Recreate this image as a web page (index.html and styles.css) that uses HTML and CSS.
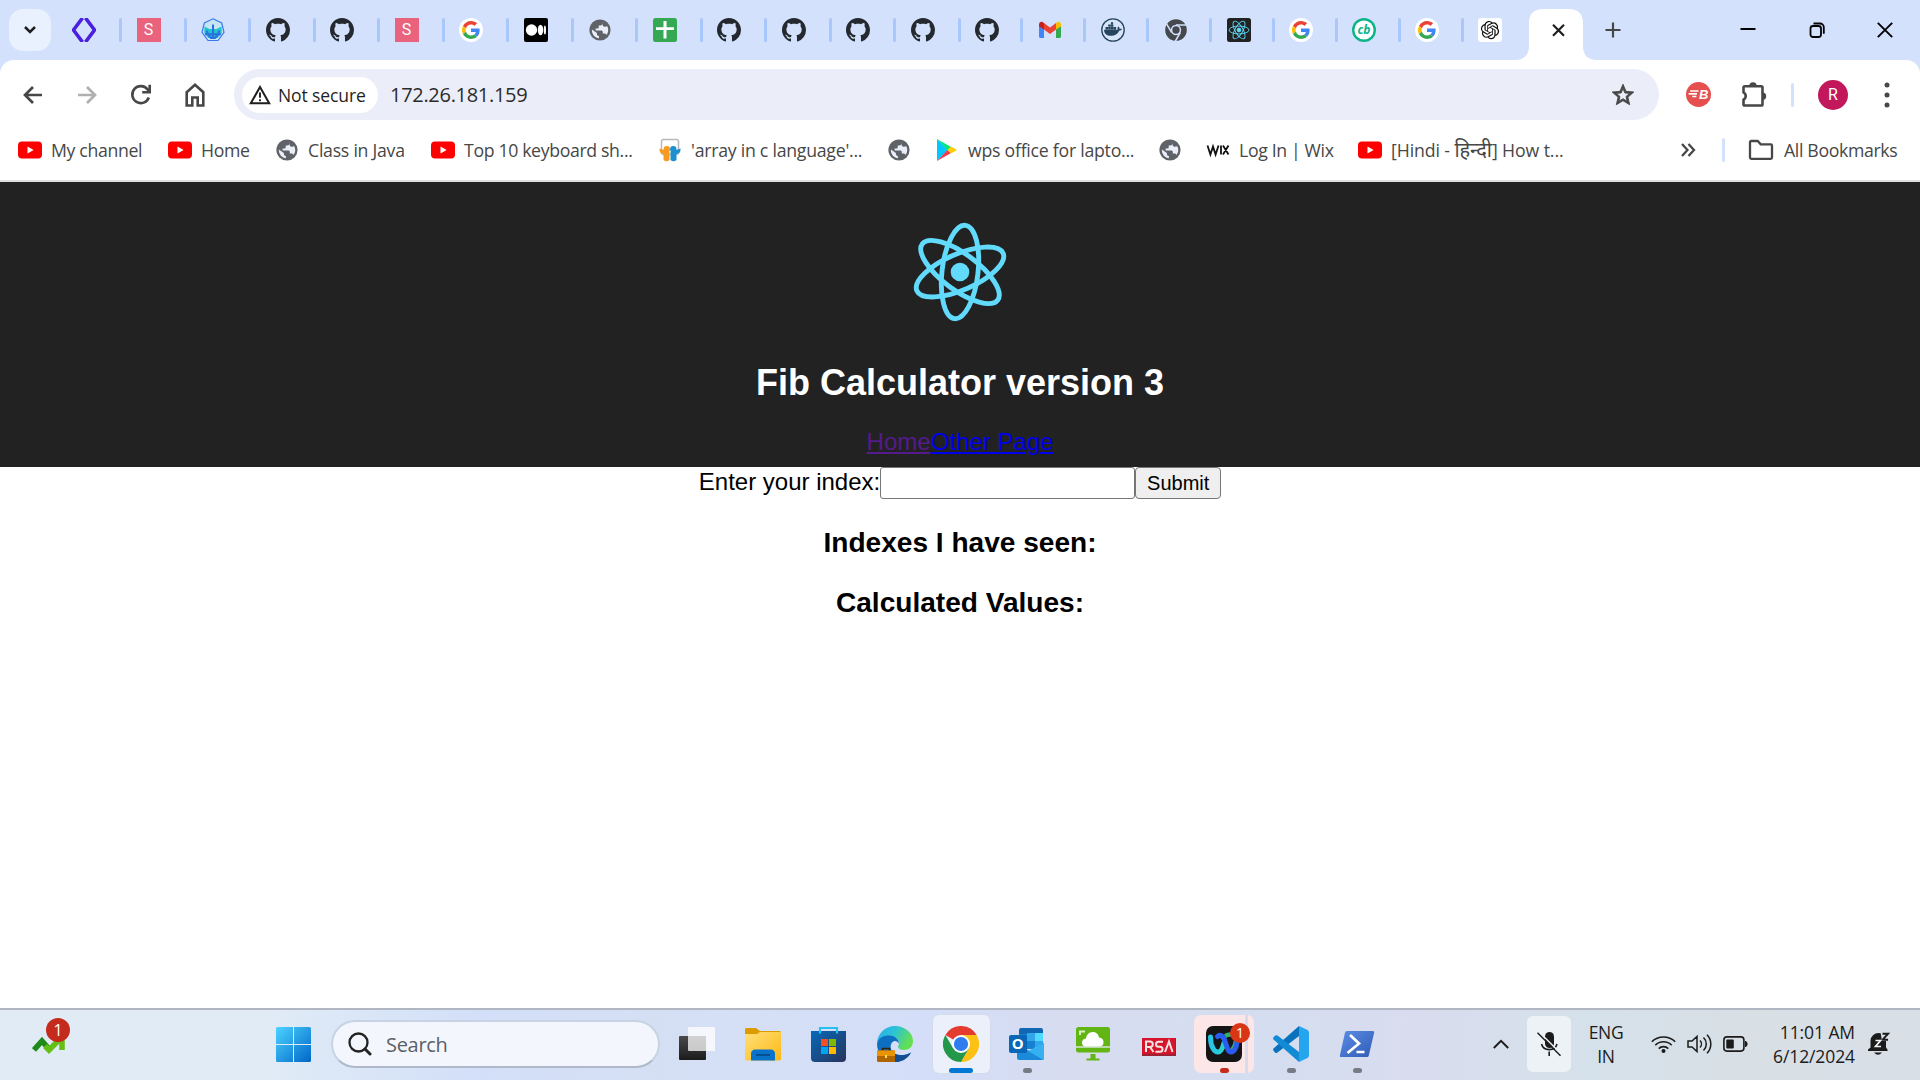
FILE: index.html
```html
<!DOCTYPE html>
<html lang="en">
<head>
<meta charset="utf-8">
<title>Fib Calculator</title>
<link rel="stylesheet" href="styles.css">
</head>
<body>
<svg class="defs" aria-hidden="true">
  <defs>
    <linearGradient id="win" x1="0" y1="0" x2="1" y2="1"><stop offset="0" stop-color="#4cd3ff"/><stop offset="1" stop-color="#0067c8"/></linearGradient>
    <linearGradient id="dark" x1="0" y1="0" x2="0" y2="1"><stop offset="0" stop-color="#4a4a4a"/><stop offset="1" stop-color="#1b1b1b"/></linearGradient>
    <linearGradient id="fold" x1="0" y1="0" x2="1" y2="1"><stop offset="0" stop-color="#ffe07a"/><stop offset="1" stop-color="#fdb813"/></linearGradient>
    <linearGradient id="store" x1="0" y1="0" x2="1" y2="1"><stop offset="0" stop-color="#0669ba"/><stop offset="1" stop-color="#29335a"/></linearGradient>
    <linearGradient id="edgeTop" x1="0" y1="0" x2="1" y2=".4"><stop offset="0" stop-color="#2aa9ee"/><stop offset=".5" stop-color="#2cc3d5"/><stop offset="1" stop-color="#63e052"/></linearGradient>
    <linearGradient id="ps" x1="0" y1="0" x2="1" y2="1"><stop offset="0" stop-color="#5c8ee6"/><stop offset="1" stop-color="#2f5bb5"/></linearGradient>
    <linearGradient id="wxa" x1="0" y1="0" x2="1" y2="0"><stop offset="0" stop-color="#27c4ea"/><stop offset="1" stop-color="#2ad0c8"/></linearGradient>
  </defs>
  <symbol id="github" viewBox="0 0 16 16"><path fill="#24292f" d="M8 0C3.58 0 0 3.58 0 8c0 3.54 2.29 6.53 5.47 7.59.4.07.55-.17.55-.38 0-.19-.01-.82-.01-1.49-2.01.37-2.53-.49-2.69-.94-.09-.23-.48-.94-.82-1.13-.28-.15-.68-.52-.01-.53.63-.01 1.08.58 1.23.82.72 1.21 1.87.87 2.33.66.07-.52.28-.87.51-1.07-1.78-.2-3.64-.89-3.64-3.95 0-.87.31-1.59.82-2.15-.08-.2-.36-1.02.08-2.12 0 0 .67-.21 2.2.82.64-.18 1.32-.27 2-.27s1.36.09 2 .27c1.53-1.04 2.2-.82 2.2-.82.44 1.1.16 1.92.08 2.12.51.56.82 1.27.82 2.15 0 3.07-1.87 3.75-3.65 3.95.29.25.54.73.54 1.48 0 1.07-.01 1.93-.01 2.2 0 .21.15.46.55.38A8.01 8.01 0 0016 8c0-4.42-3.58-8-8-8z"/></symbol>
  <symbol id="google" viewBox="0 0 24 24"><circle cx="12" cy="12" r="12" fill="#fff"/><g transform="translate(3 3) scale(.375)"><path fill="#EA4335" d="M24 9.5c3.54 0 6.71 1.22 9.21 3.6l6.85-6.85C35.9 2.38 30.47 0 24 0 14.62 0 6.51 5.38 2.56 13.22l7.98 6.19C12.43 13.72 17.74 9.5 24 9.5z"/><path fill="#4285F4" d="M46.98 24.55c0-1.57-.15-3.09-.38-4.55H24v9.02h12.94c-.58 2.96-2.26 5.48-4.78 7.18l7.73 6c4.51-4.18 7.09-10.36 7.09-17.65z"/><path fill="#FBBC05" d="M10.53 28.59c-.48-1.45-.76-2.99-.76-4.59s.27-3.14.76-4.59l-7.98-6.19C.92 16.46 0 20.12 0 24c0 3.88.92 7.54 2.56 10.78l7.97-6.19z"/><path fill="#34A853" d="M24 48c6.48 0 11.93-2.13 15.89-5.81l-7.73-6c-2.15 1.45-4.92 2.3-8.16 2.3-6.26 0-11.57-4.22-13.47-9.91l-7.98 6.19C6.51 42.62 14.62 48 24 48z"/></g></symbol>
  <symbol id="globe" viewBox="1 1 22 22"><circle cx="12" cy="12" r="10.6" fill="#5f6368"/><path fill="#e9eef8" d="M14.5 3.8c.8 1.7-.2 3.5-2 3.6h-1.8v1.8c0 .8-.5 1.2-1.3 1.2H7.6v2h5.600c1 0 1.600.7 1.600 1.600v1.600h1.800c.9 0 1.500.6 1.700 1.500 1.200-1.400 1.900-3.100 1.900-5.100 0-1.500-.4-2.600-1-3.700l-2.300.4c-1.500.1-2.500-1-2.200-2.300zM3.900 11.500c-.3 4.500 2.800 8.300 7 8.700v-2.300c-1.200 0-2-.9-2-2v-1z"/></symbol>
  <symbol id="youtube" viewBox="0 0 24 24"><rect y="3.500" width="24" height="17" rx="4" fill="#f00"/><path fill="#fff" d="M9.500 8.600v6.800L15.600 12z"/></symbol>
  <symbol id="atom" viewBox="-50 -50 100 100"><g fill="none" stroke="#61dafb" stroke-width="4.900"><ellipse rx="47" ry="18" transform="rotate(-83.400)"/><ellipse rx="47" ry="18" transform="rotate(-23.400)"/><ellipse rx="47" ry="18" transform="rotate(36.600)"/></g><circle r="9.300" fill="#61dafb"/></symbol>
</svg>

<header class="browser">
  <div class="tabstrip">
    <div class="tab-search"><svg width="14" height="10" viewBox="0 0 14 10"><path d="M2 2l5 5 5-5" fill="none" stroke="#1f1f1f" stroke-width="2.500"/></svg></div>
    <div class="tab"><svg viewBox="0 0 24 24"><path d="M10.500 0L1.500 12l9 12M13.500 0l9 12-9 12" fill="none" stroke="#4a1fe0" stroke-width="3.600"/></svg></div>
    <div class="tab"><span class="letter">S</span></div>
    <div class="tab"><svg viewBox="0 0 24 24"><path d="M12 .8l8.700 4.200 2.300 9.300-6 8.200H7l-6-8.200L3.300 5z" fill="#c4e6f2" stroke="#3e78ee" stroke-width="1.200"/><path d="M3.500 8.500l5 2.500h7l5-2.500.3 6.500-4.300 5h-9l-4.300-5z" fill="#22c4ce"/><path d="M12 6.500v14.500M6 12.500c0 3 1.500 5 4 7.500h4c2.500-2.500 4-4.500 4-7.500M4 16.200h16" fill="none" stroke="#2b6fe0" stroke-width="2"/></svg></div>
    <div class="tab"><svg><use href="#github"/></svg></div>
    <div class="tab"><svg><use href="#github"/></svg></div>
    <div class="tab"><span class="letter">S</span></div>
    <div class="tab"><svg><use href="#google"/></svg></div>
    <div class="tab"><svg viewBox="0 0 24 24"><rect width="24" height="24" rx="2"/><g fill="#fff"><circle cx="7.500" cy="12" r="5.700"/><ellipse cx="16.500" cy="12" rx="2.700" ry="5.200"/><ellipse cx="20.900" cy="12" rx="1.100" ry="4.600"/></g></svg></div>
    <div class="tab"><svg class="inset"><use href="#globe"/></svg></div>
    <div class="tab"><svg viewBox="0 0 24 24"><rect width="24" height="24" rx="2.500" fill="#34a853"/><path d="M10.500 3h3v6.200H21v2.800h-7.500v8.500h-3V12H3V9.200h7.500z" fill="#fff"/></svg></div>
    <div class="tab"><svg><use href="#github"/></svg></div>
    <div class="tab"><svg><use href="#github"/></svg></div>
    <div class="tab"><svg><use href="#github"/></svg></div>
    <div class="tab"><svg><use href="#github"/></svg></div>
    <div class="tab narrow"><svg><use href="#github"/></svg></div>
    <div class="tab narrow"><svg viewBox="0 0 24 24"><path fill="#4285f4" d="M1 7v11.500C1 19.300 1.700 20 2.500 20H6V10z"/><path fill="#34a853" d="M18 20h3.500c.8 0 1.500-.7 1.500-1.500V7l-5 3z"/><path fill="#ea4335" d="M6 11.500V5l6 4.600L18 5v6.500L12 16z"/><path fill="#c5221f" d="M1 6.500v2l5 3V5L4.500 4C2.900 2.900 1 4.500 1 6.500z"/><path fill="#fbbc04" d="M18 5v6.500l5-3v-2c0-2-1.900-3.600-3.500-2.500z"/></svg></div>
    <div class="tab narrow"><svg viewBox="0 0 24 24"><circle cx="12" cy="12" r="11.200" fill="#d7e5fa" stroke="#25455c" stroke-width="1.300"/><path fill="#25455c" d="M3 11.700h13.800c-.6-1.300-.3-2.300.5-3.200 1.100.6 1.300 1.500 1.200 2.300 1-.3 1.800-.1 2.500.3-.5 1.200-1.500 1.600-2.800 1.600-1.500 3.600-4.300 5-8 5-4.500 0-7-2-7.200-6zM4.500 9h2.500v2.500H4.500zM7.200 9h2.500v2.500H7.200zM9.900 9h2.500v2.500H9.900zM12.600 9h2.500v2.500h-2.500zM7.200 6.600h2.500v2.200H7.200zM9.900 6.600h2.500v2.200H9.900zM9.900 4.300h2.200v2H9.900z"/></svg></div>
    <div class="tab narrow"><svg viewBox="0 0 24 24"><circle cx="12" cy="12" r="8" fill="none" stroke="#45494d" stroke-width="5.600"/><circle cx="12" cy="12" r="3.700" fill="#45494d"/><path d="M12 7h10.500M7.700 14.500L2.400 5.600M16.300 14.500l-5.200 9" stroke="#d3e1fc" stroke-width="1.500"/></svg></div>
    <div class="tab narrow"><svg viewBox="0 0 24 24"><rect width="24" height="24" rx="2.500" fill="#222"/><g fill="none" stroke="#61dafb" stroke-width=".9" transform="translate(12 12)"><ellipse rx="10" ry="3.900"/><ellipse rx="10" ry="3.900" transform="rotate(60)"/><ellipse rx="10" ry="3.900" transform="rotate(120)"/><circle r="1.900" fill="#61dafb"/></g></svg></div>
    <div class="tab narrow"><svg><use href="#google"/></svg></div>
    <div class="tab narrow"><svg viewBox="0 0 24 24"><circle cx="12" cy="12" r="12" fill="#0eb489"/><circle cx="12" cy="12" r="9.600" fill="#fff"/><text x="12" y="16" font-size="12" font-weight="700" font-style="italic" text-anchor="middle" fill="#0eb489" font-family="Open Sans, sans-serif">cb</text></svg></div>
    <div class="tab narrow"><svg><use href="#google"/></svg></div>
    <div class="tab narrow last"><svg viewBox="0 0 24 24"><rect width="24" height="24" rx="3" fill="#fff"/><path transform="translate(2.900 2.900) scale(.76)" fill="#111" d="M22.282 9.821a5.985 5.985 0 0 0-.516-4.910 6.046 6.046 0 0 0-6.510-2.900A6.065 6.065 0 0 0 4.981 4.182a5.985 5.985 0 0 0-3.998 2.900 6.046 6.046 0 0 0 .743 7.097 5.980 5.980 0 0 0 .511 4.911 6.051 6.051 0 0 0 6.515 2.900A5.985 5.985 0 0 0 13.260 24a6.056 6.056 0 0 0 5.772-4.206 5.989 5.989 0 0 0 3.998-2.900 6.056 6.056 0 0 0-.748-7.073zm-9.022 12.608a4.476 4.476 0 0 1-2.876-1.041l.142-.080 4.778-2.758a.795.795 0 0 0 .393-.681v-6.737l2.020 1.169a.071.071 0 0 1 .038.052v5.583a4.504 4.504 0 0 1-4.495 4.494zm-9.661-4.125a4.471 4.471 0 0 1-.535-3.014l.142.085 4.783 2.758a.771.771 0 0 0 .781 0l5.843-3.369v2.332a.080.080 0 0 1-.033.062L9.740 19.950a4.499 4.499 0 0 1-6.141-1.646zM2.341 7.896a4.485 4.485 0 0 1 2.366-1.973V11.600a.766.766 0 0 0 .388.677l5.814 3.354-2.020 1.169a.076.076 0 0 1-.071 0l-4.830-2.787A4.504 4.504 0 0 1 2.341 7.872zm16.596 3.856L13.104 8.364 15.119 7.200a.076.076 0 0 1 .071 0l4.830 2.791a4.494 4.494 0 0 1-.677 8.104v-5.677a.790.790 0 0 0-.407-.667zm2.011-3.023l-.142-.085-4.774-2.782a.776.776 0 0 0-.785 0L9.409 9.230V6.897a.066.066 0 0 1 .028-.062l4.830-2.787a4.499 4.499 0 0 1 6.680 4.660zM8.307 12.863l-2.020-1.164a.080.080 0 0 1-.038-.057V6.074a4.499 4.499 0 0 1 7.376-3.454l-.142.081L8.704 5.459a.795.795 0 0 0-.393.681zm1.098-2.365l2.602-1.500 2.607 1.500v2.999l-2.597 1.500-2.607-1.500Z"/></svg></div>
    <div class="tab-active">
      <svg width="82" height="51" viewBox="0 0 82 51"><path d="M0 51c9 0 14-5 14-14V14C14 5 19 0 28 0h26c9 0 14 5 14 14v23c0 9 5 14 14 14z" fill="#fff"/><path d="M38 15.800l11 11M49 15.800l-11 11" stroke="#1f1f1f" stroke-width="2.200"/></svg>
    </div>
    <svg class="new-tab" width="16" height="16" viewBox="0 0 16 16"><path d="M8 .5v15M.5 8h15" stroke="#444746" stroke-width="2.200"/></svg>
    <div class="window-buttons">
      <svg viewBox="0 0 16 16"><path d="M.5 7h15" stroke="#000" stroke-width="2"/></svg>
      <svg viewBox="0 0 16 16"><rect x="1.500" y="4" width="10.500" height="11" rx="2.500" fill="none" stroke="#000" stroke-width="1.800"/><path d="M4.500 1.500h6.500a3.800 3.800 0 0 1 3.800 3.800v6.500" fill="none" stroke="#000" stroke-width="1.800"/></svg>
      <svg viewBox="0 0 16 16"><path d="M.8.8l14.400 14.400M15.200.8L.8 15.200" stroke="#000" stroke-width="1.900"/></svg>
    </div>
  </div>

  <div class="chrome-panel">
    <div class="toolbar">
      <svg class="nav-icon" viewBox="0 0 24 24"><path d="M21 12H4.500M12 4l-8 8 8 8" fill="none" stroke="#474747" stroke-width="2.700"/></svg>
      <svg class="nav-icon" viewBox="0 0 24 24"><path d="M3 12h16.500M12 4l8 8-8 8" fill="none" stroke="#b0b0b0" stroke-width="2.700"/></svg>
      <svg class="nav-icon" viewBox="0 0 24 24"><path d="M19.800 14.500A8.500 8.500 0 1 1 18.600 6.500L20.500 9M20.700 1.800v7.500h-7.500" fill="none" stroke="#474747" stroke-width="2.600"/></svg>
      <svg class="nav-icon" viewBox="0 0 24 24"><path d="M3.700 9.200L12 1.800l8.300 7.400v13.300h-5.600v-8H9.300v8H3.700z" fill="none" stroke="#474747" stroke-width="2.600"/></svg>
      <div class="omnibox">
        <div class="chip"><svg width="22" height="20" viewBox="0 0 22 20"><path d="M11 2L1.800 18.300h18.400z" fill="none" stroke="#1f1f1f" stroke-width="2"/><path d="M11 7.500v5.300M11 14.200v2" stroke="#1f1f1f" stroke-width="1.900"/></svg><span>Not secure</span></div>
        <span class="url">172.26.181.159</span>
        <svg class="star" width="26" height="26" viewBox="0 0 24 24"><path fill="#474747" d="M22 9.240l-7.190-.62L12 2 9.190 8.630 2 9.240l5.460 4.730L5.820 21 12 17.270 18.180 21l-1.630-7.030L22 9.240zM12 15.400l-3.760 2.270 1-4.280-3.320-2.880 4.380-.38L12 6.100l1.710 4.040 4.380.38-3.320 2.880 1 4.280L12 15.400z" stroke="#474747" stroke-width=".8"/></svg>
      </div>
      <svg class="ext" width="25" height="25" viewBox="0 0 24 24"><circle cx="12" cy="12" r="12" fill="#e5504f"/><path d="M4 8.700h8M2.500 11.400h8M6 14h4" stroke="#fff" stroke-width="1.500"/><text x="17" y="16.300" font-size="12.500" font-weight="700" font-style="italic" text-anchor="middle" fill="#fff" font-family="Liberation Sans, sans-serif">B</text></svg>
      <svg class="puzzle" width="28" height="28" viewBox="0 0 28 28"><path d="M3.500 6.500c0-.8.500-1.300 1.300-1.300h16.400c.8 0 1.300.5 1.300 1.300v16.700c0 .8-.5 1.300-1.300 1.300H4.800c-.8 0-1.300-.5-1.300-1.300v-4.500a4.200 4.200 0 0 0 0-7.400z" fill="none" stroke="#474747" stroke-width="2.600"/><path d="M9.300 5a3.700 3.700 0 0 1 7.400 0zM22.500 11.500a3.700 3.700 0 0 1 0 7.400z" fill="#474747"/></svg>
      <span class="divider"></span>
      <span class="avatar">R</span>
      <svg class="dots" width="6" height="26" viewBox="0 0 6 26"><g fill="#474747"><circle cx="3" cy="3" r="2.500"/><circle cx="3" cy="13" r="2.500"/><circle cx="3" cy="23" r="2.500"/></g></svg>
    </div>
    <nav class="bookmarks">
      <a class="bm w150"><svg><use href="#youtube"/></svg><span>My channel</span></a>
      <a class="bm w108"><svg><use href="#youtube"/></svg><span>Home</span></a>
      <a class="bm w155"><svg class="sm"><use href="#globe"/></svg><span class="loose">Class in Java</span></a>
      <a class="bm w227"><svg><use href="#youtube"/></svg><span>Top 10 keyboard sh...</span></a>
      <a class="bm w230"><svg viewBox="0 0 24 24"><rect x="3.500" y="1.500" width="17" height="15" rx="2" fill="#fff" stroke="#b9b9b9" stroke-width="1.500"/><path d="M1.500 10.500q-.5 5 4 5.500v6q3 2.500 6 0V14z" fill="#f69a20"/><path d="M22.500 10.500q.5 5-4 5.500v6q-3 2.500-6 0V14z" fill="#1f8fd0"/><circle cx="8.800" cy="11.300" r="3.200" fill="#f69a20"/><circle cx="15.300" cy="11.300" r="3.200" fill="#1f8fd0"/></svg><span class="loose">'array in c language'...</span></a>
      <a class="bm w49"><svg class="sm"><use href="#globe"/></svg></a>
      <a class="bm w222"><svg viewBox="0 0 24 24"><path d="M2 1l11 11L2 23z" fill="#00c8ff"/><path d="M2 1l14 8-3.500 3z" fill="#00e676"/><path d="M2 23l14-8-3.500-3z" fill="#f4384a"/><path d="M16 8.500l6 3.500-6 3.500-3.500-3.500z" fill="#ffcd00"/></svg><span class="loose">wps office for lapto...</span></a>
      <a class="bm w49"><svg class="sm"><use href="#globe"/></svg></a>
      <a class="bm w150 wix"><svg viewBox="0 0 24 24"><path d="M1.500 7.500L4.400 16.500 7 8.500 9.600 16.500l2.900-9M15 7.500v9M17 7.500l5.500 9M22.500 7.500l-5.500 9" fill="none" stroke="#111" stroke-width="1.800"/></svg><span>Log In | Wix</span></a>
      <a class="bm"><svg><use href="#youtube"/></svg><span class="hindi">[Hindi - <b>हिन्दी</b>] How t...</span></a>
      <svg class="more" width="16" height="14" viewBox="0 0 16 14"><path d="M2 1l5.500 6L2 13M8.500 1L14 7l-5.500 6" fill="none" stroke="#474747" stroke-width="2.300"/></svg>
      <span class="divider"></span>
      <a class="bm all"><svg viewBox="0 0 26 24"><path d="M2 4.300c0-.8.500-1.300 1.300-1.300h6.400l3 3.300h10c.8 0 1.300.5 1.300 1.300v12c0 .8-.5 1.300-1.300 1.300H3.300c-.8 0-1.300-.5-1.300-1.300z" fill="none" stroke="#474747" stroke-width="2.300"/></svg><span>All Bookmarks</span></a>
    </nav>
  </div>
</header>

<main class="app">
  <div class="app-header">
    <svg class="app-logo"><use href="#atom"/></svg>
    <h1>Fib Calculator version 3</h1>
    <div class="links"><a class="visited" href="#">Home</a><a class="link" href="#">Other Page</a></div>
  </div>
  <form class="index-form"><label for="idx">Enter your index:</label><input id="idx"><button type="button">Submit</button></form>
  <h3>Indexes I have seen:</h3>
  <h3>Calculated Values:</h3>
</main>

<footer class="taskbar">
  <div class="widget"><svg viewBox="0 0 34 17" width="34" height="17"><path d="M2 13l8-9 7 8" fill="none" stroke="#1d8a1a" stroke-width="5.500"/><path d="M13 9l4 4L27 3M30 1v12" fill="none" stroke="#63bf12" stroke-width="5.500"/></svg><span class="badge">1</span></div>
  <svg class="start" viewBox="0 0 35 35"><path fill="url(#win)" d="M1.500 0H17v17H0V1.500A1.500 1.500 0 0 1 1.500 0zM18 0h15.500A1.500 1.500 0 0 1 35 1.500V17H18zM0 18h17v17H1.500A1.500 1.500 0 0 1 0 33.500zM18 18h17v15.500a1.500 1.500 0 0 1-1.500 1.500H18z"/></svg>
  <div class="search"><svg width="24" height="24" viewBox="0 0 24 24"><circle cx="10.500" cy="10.500" r="9" fill="none" stroke="#222" stroke-width="2.300"/><path d="M17 17l5 5" stroke="#222" stroke-width="3" stroke-linecap="round"/></svg><span>Search</span></div>
  <div class="apps">
    <div class="task"><svg viewBox="0 0 36 36"><rect x="0" y="10" width="27" height="24" rx="1" fill="url(#dark)"/><rect x="9" y="1" width="27" height="24" rx="1" fill="#fff" opacity=".75"/></svg></div>
    <div class="task"><svg viewBox="0 0 36 36"><path d="M0 3.500Q0 2 1.500 2H11l4 3h19.500Q36 5 36 6.500V15H0z" fill="#dc9b00"/><path d="M0 8h12l3-2h21v27q0 1.500-1.500 1.500h-33Q0 34.500 0 33z" fill="url(#fold)"/><path d="M6 34.500V28q0-4.500 4.500-4.500h15Q30 23.500 30 28v6.500z" fill="#0873c9"/><path d="M11 29h14" stroke="#065091" stroke-width="2"/></svg></div>
    <div class="task"><svg viewBox="0 0 36 36"><path d="M9 7V2h17v5" fill="none" stroke="#27c0f0" stroke-width="2.200"/><path d="M0 5h35v27q0 4-4 4H4q-4 0-4-4z" fill="url(#store)"/><path d="M9 5v2.500M26 5v2.500" stroke="#27c0f0" stroke-width="2.200"/><path d="M10 13h7v7h-7z" fill="#f25022"/><path d="M18 13h7v7h-7z" fill="#7fba00"/><path d="M10 21h7v7h-7z" fill="#00a4ef"/><path d="M18 21h7v7h-7z" fill="#ffb900"/></svg></div>
    <div class="task"><svg viewBox="0 0 36 36"><path d="M0 18C0 8 8 0 18 0s18 7 18 15c0 6-4 9-9 9-4 0-6-1.500-6-3s1-2 1-4c0-4-4-7-9-7C6 10 1 13 0 18z" fill="url(#edgeTop)"/><path d="M0 18c1-6 6-8.500 12-8.500 5.500 0 10 3.500 10 8-1.500-3-5-3.500-7-1-3 4-1 9 3 11 5 2.500 11 2 16-1-4 7-10 9.500-16 9.500C8 36 0 28 0 18z" fill="#0d6fc2"/><path d="M14.500 18c-2 5 0 8 3.500 10 5 2 11 1.500 16-1.500-4 7-10 9.500-16 9.500-4-5-6-13-3.500-18z" fill="#124d91"/><path d="M5.500 25v-2.500h7V25" fill="none" stroke="#3c2100" stroke-width="1.500"/><path d="M0 24.500h18V36H1.500Q0 36 0 34.500z" fill="#b06503"/><path d="M0 24.500h18V30H0z" fill="#e89405"/><path d="M8 29h2v3H8z" fill="#ffda55"/></svg></div>
    <div class="task active"><svg viewBox="0 0 36 36"><path d="M18 18L2.400 9A18 18 0 0 1 33.600 9z" fill="#e33b2e"/><path d="M18 9h15.600A18 18 0 0 1 18 36l7.800-13.500z" fill="#fdc116"/><path d="M10.200 22.500L2.400 9A18 18 0 0 0 18 36l7.800-13.500z" fill="#23984a"/><circle cx="18" cy="18" r="9" fill="#fff"/><circle cx="18" cy="18" r="7.100" fill="#2f7bf0"/></svg><i class="pill wide"></i></div>
    <div class="task"><svg viewBox="0 0 36 36"><path d="M10 4q0-2 2-2h20q2 0 2 2v15H10z" fill="#1267b4"/><path d="M10 8h8v8h-8z" fill="#1781d1"/><path d="M18 7h8v9h-8z" fill="#31a6ea"/><path d="M26 7h8v9h-8z" fill="#50d9ff"/><path d="M18 15h8v8h-8z" fill="#1781d1"/><path d="M26 15h8v6h-8z" fill="#31a6ea"/><path d="M35 17v15q0 2-2 2H10q-2 0-2-2V18l14 8z" fill="#1b8ad8"/><path d="M35 17v15q0 1-1 1.800L19 25z" fill="#35b1f2"/><rect y="9" width="18" height="18" rx="2" fill="#0a66b7"/><text x="8.800" y="23" text-anchor="middle" font-size="15" font-weight="700" fill="#fff" font-family="Open Sans, sans-serif">O</text></svg><i class="pill"></i></div>
    <div class="task"><svg viewBox="0 0 36 36"><rect x="1" y="1" width="34" height="25.500" rx="2.500" fill="#63b514"/><path d="M1 21h34" stroke="#d9e6e0" stroke-width="1.500"/><path d="M5 9V5.500h5" fill="none" stroke="#d9f0c0" stroke-width="2"/><path d="M10 20.500q-3-.5-3-3.700 0-3.800 4-4.300Q12 6 17.500 6q5.500 0 6.500 5.500 4.500.5 4.500 4.700 0 3.800-3.500 4.300z" fill="#fff"/><path d="M15.500 28h5v4.500h4V34.500h-13v-2h4z" fill="#63b514"/></svg></div>
    <div class="task"><svg viewBox="0 0 36 36"><path d="M1 12h34v18H1z" fill="#9e2034"/><path d="M1 12h33v16H1z" fill="#d5152c"/><path d="M5 26V15.500h4.500a2.800 2.800 0 0 1 0 5.500H5m4 0l3.500 5M22 15.800h-4.500a2.500 2.500 0 0 0 0 5h1.500a2.500 2.500 0 0 1 0 5h-4.500M24 26l4-10.500L31.500 26" fill="none" stroke="#f6e4e5" stroke-width="2"/></svg></div>
    <div class="task alert"><svg viewBox="0 0 36 36"><rect width="36" height="36" rx="7" fill="#151515"/><path d="M19 10c6-3 12-1 11 5-.5 4-2 7-4.500 10" fill="none" stroke="#2fae6c" stroke-width="4.500"/><path d="M4.500 11c0 10 4 15 7.500 15 4 0 5-6 6-9" fill="none" stroke="url(#wxa)" stroke-width="5" stroke-linecap="round"/><path d="M11.500 10.500c2-2 5-1.500 7 3.500s3 12 6.500 12 5.500-5 6-10" fill="none" stroke="#2b5cf2" stroke-width="5" stroke-linecap="round"/></svg><span class="badge small">1</span><i class="pill red"></i></div>
    <div class="task"><svg viewBox="0 0 36 36"><path d="M26 0v10L4.500 26.500Q3 27.500 2 26.500L.4 24.500Q-.5 23 1 22z" fill="#0a72bd"/><path d="M4.500 9.500Q3 8.700 2 9.700L.4 11.500Q-.5 13 1 14l25 22V26z" fill="#138ad4"/><path d="M26 0l8.500 4Q36 5 36 6.500v23q0 1.500-1.500 2.500L26 36z" fill="#25a5ee"/></svg><i class="pill"></i></div>
    <div class="task"><svg viewBox="0 0 36 36"><path d="M8 5h26q1.500 0 1.200 1.500L29.800 29.500Q29.400 31 28 31H2Q.5 31 .9 29.500L6 6.500Q6.400 5 8 5z" fill="url(#ps)"/><path d="M11 9l9 8.500L8.500 27M17.500 26h8" fill="none" stroke="#fff" stroke-width="2.700"/></svg><i class="pill"></i></div>
  </div>
  <div class="tray">
    <svg class="chev" width="16" height="10" viewBox="0 0 16 10"><path d="M.8 9L8 1.800 15.200 9" fill="none" stroke="#1b1b1b" stroke-width="1.900"/></svg>
    <div class="mic"><svg width="24" height="25" viewBox="0 0 24 25"><rect x="8" y="0" width="9" height="16" rx="4.500" fill="#1b1b1b"/><path d="M4.500 12a8 7.500 0 0 0 15.500 0M12.200 19.500V24" fill="none" stroke="#1b1b1b" stroke-width="1.600"/><path d="M1.500-.7l23 23" stroke="#edf2f7" stroke-width="1.500"/><path d="M.5.800l23 23" stroke="#1b1b1b" stroke-width="1.500"/></svg></div>
    <div class="lang">ENG<br>IN</div>
    <svg class="wifi" width="25" height="18" viewBox="0 0 25 18"><g fill="none" stroke="#1b1b1b" stroke-width="1.600"><path d="M.8 6.800a16.500 16.500 0 0 1 23.400 0M4.300 10.200a11.600 11.600 0 0 1 16.400 0M7.700 13.600a6.800 6.800 0 0 1 9.600 0"/></g><circle cx="12.500" cy="16" r="2" fill="#1b1b1b"/></svg>
    <svg class="vol" width="25" height="20" viewBox="0 0 25 20"><g fill="none" stroke="#1b1b1b" stroke-width="1.500"><path d="M1 7h4l5-4.500v15L5 13H1zM13 6.500a5 5 0 0 1 0 7M16.500 3.500a9 9 0 0 1 0 13M20 .8a13 13 0 0 1 0 18.400"/></g></svg>
    <svg class="bat" width="25" height="16" viewBox="0 0 25 16"><rect x=".9" y=".9" width="20" height="14.200" rx="3" fill="none" stroke="#1b1b1b" stroke-width="1.600"/><rect x="3.300" y="3.500" width="7.500" height="9" rx="1" fill="#1b1b1b"/><path d="M22 5h1l1.500 2v2L23 11h-1z" fill="#1b1b1b"/></svg>
    <div class="clock">11:01 AM<br>6/12/2024</div>
    <svg class="bell" width="22" height="24" viewBox="0 0 22 24"><path d="M2.500 15.500V8.500a8 8 0 0 1 8-7.500q5 0 7.500 4v10.500l1.500 2v1.500H0v-1.500zM6 20.500h8q-4 4.500-8 0z" fill="#1b1b1b"/><path d="M12.500 0H22v9h-8z" fill="#d8dfe5"/><path d="M14.500 1.800h5.500l-5.500 6h5.500" fill="none" stroke="#1b1b1b" stroke-width="1.900"/><path d="M7.500 8.500h5l-5 6h5.500" fill="none" stroke="#f0f3f6" stroke-width="1.700"/></svg>
  </div>
</footer>
</body>
</html>
```
FILE: styles.css
```css
* { box-sizing: border-box; }
html, body { height: 100%; }
body {
  margin: 0;
  display: flex;
  flex-direction: column;
  width: 1920px;
  height: 1080px;
  overflow: hidden;
  background: #fff;
  font-family: "Open Sans", "Noto Sans", sans-serif;
}
svg { display: block; flex: none; }
.defs { position: absolute; width: 0; height: 0; }

/* Browser frame */
.browser { height: 182px; flex: none; background: #d3e1fc; border-bottom: 2px solid #dedede; }
.tabstrip { display: flex; height: 60px; padding-left: 9px; align-items: center; }
.tab-search {
  display: flex; align-items: center; justify-content: center;
  width: 42px; height: 42px; margin-right: 6.5px; border-radius: 14px; background: #e9f0fe;
}
.tab { display: flex; align-items: center; justify-content: space-between; width: 64.500px; height: 24px; padding-left: 14.5px; flex: none; }
.tab svg { width: 24px; height: 24px; }
.tab svg.inset { width: 22px; height: 22px; margin-left: 1px; }
.letter { width: 24px; height: 24px; background: #e8637b; color: #fff; font: 16px/24px Roboto, sans-serif; text-align: center; }
.tab::after { content: ""; width: 3px; height: 24px; border-radius: 2px; background: #a8c7fa; }
.tab.narrow { width: 62.9px; }
.tab.last { width: 38.500px; }
.tab.last::after { display: none; }
.tab-active { align-self: flex-end; margin-left: 12.500px; }
.new-tab { margin-left: 8px; }
.window-buttons { display: flex; gap: 52.500px; margin-left: auto; padding-right: 27px; }
.window-buttons svg { width: 16px; height: 16px; }

.chrome-panel { height: 120px; background: #fff; border-radius: 14px 14px 0 0; }
.toolbar { display: flex; align-items: center; height: 69px; padding-left: 21px; }
.nav-icon { width: 24px; height: 24px; margin-right: 30px; }
.omnibox {
  display: flex; align-items: center; width: 1425px; height: 51px; margin-left: -3px;
  padding: 0 23px 0 8px; border-radius: 26px; background: #ebeef8;
}
.chip { display: flex; align-items: center; gap: 7px; width: 136px; height: 36px; padding-left: 7px; border-radius: 18px; background: #fff; }
.chip span { font-size: 17.500px; font-weight: 500; letter-spacing: -.1px; color: #1f1f1f; white-space: nowrap; }
.url { margin-left: 12px; font-size: 20px; letter-spacing: -.3px; color: #2b2b2b; }
.star { margin-left: auto; }
.ext { margin-left: 27px; }
.puzzle { margin-left: 29px; }
.divider { width: 3px; height: 24px; border-radius: 2px; background: #d3e1fc; }
.toolbar .divider { margin-left: 23px; }
.avatar {
  display: flex; align-items: center; justify-content: center; width: 30px; height: 30px; margin-left: 24px;
  border-radius: 50%; background: #c2185b; color: #fff; font: 16px Roboto, sans-serif;
}
.dots { margin-left: 36px; }

.bookmarks { display: flex; align-items: center; height: 41px; padding-left: 18px; }
.bm { display: flex; align-items: center; gap: 9px; flex: none; color: #474747; font-size: 17.700px; letter-spacing: -.35px; white-space: nowrap; }
.bm svg { width: 24px; height: 24px; }
.bm svg.sm { width: 22px; height: 22px; margin: 0 1px; }
.loose { letter-spacing: -.25px; }
.hindi { letter-spacing: -.1px; }
.hindi b { font-size: 20px; font-weight: 400; line-height: 20px; }
.w150 { width: 150px; }
.w108 { width: 107px; }
.w155 { width: 156px; }
.w227 { width: 227px; }
.w230 { width: 229px; }
.w49 { width: 48px; }
.w222 { width: 223px; }
.wix { width: 152px; }
.more { margin-left: auto; margin-right: 26px; }
.bm.all { width: 147px; margin-left: 23px; margin-right: 25px; gap: 10px; }
.bm.all svg { width: 26px; }

/* Web page */
.app { flex: 1; text-align: center; font: 24px/27px "Liberation Sans", Arial, sans-serif; color: #000; }
.app-header { display: flex; flex-direction: column; align-items: center; height: 285px; padding-top: 40px; background: #222; }
.app-logo { width: 100px; height: 100px; }
h1 { margin: 40px 0 0; font-size: 36px; line-height: 42px; color: #fff; }
.links { margin-top: 24px; line-height: 27px; }
.visited { color: #551a8b; }
.link { color: #0000ee; }
.index-form { display: flex; justify-content: center; height: 32px; line-height: 30px; }
.index-form input { width: 255px; height: 32px; margin: 0; border: 1.500px solid #767676; border-radius: 3px; background: #fff; }
.index-form button { width: 86px; height: 32px; margin: 0; padding: 0; border: 1.500px solid #767676; border-radius: 4px; background: #efefef; color: #000; font: 20px "Liberation Sans", Arial, sans-serif; }
h3 { margin: 28px 0 0; font-size: 28.080px; line-height: 32px; }

/* Taskbar */
.taskbar {
  display: flex; align-items: center; height: 72px; flex: none; border-top: 2px solid #b0b6c2; padding: 0 0 2px 32px;
  background: linear-gradient(90deg, #e0ebf5 0, #e0ebf6 270px, #d3dff8 480px, #d5dff4 660px, #d4def8 930px, #d7dcef 1080px, #d4def0 1250px, #d8dcee 1420px, #d5e1ea 1590px, #d8dfe5 1750px, #d8dfe7 1920px);
}
.widget { position: relative; width: 34px; height: 34px; display: flex; align-items: center; }
.widget svg { margin-top: 2px; }
.badge {
  position: absolute; left: 14px; top: -9px; width: 24px; height: 24px; border-radius: 50%;
  background: #c42b1c; color: #fff; font-size: 16px; line-height: 24px; text-align: center;
}
.start { width: 35px; height: 35px; margin-left: 210px; }
.search {
  display: flex; align-items: center; gap: 14px; width: 329px; height: 48px; margin-left: 20px; padding-left: 15px;
  border: 2px solid #c7d2e4; border-bottom-color: #b0b9cb; border-radius: 24px; background: #f3f6fd; color: #5b5f66; font-size: 20px; letter-spacing: -.3px;
}
.apps { display: flex; margin-left: 4px; }
.task { position: relative; display: flex; align-items: center; justify-content: center; width: 57px; height: 58px; margin: 0 4.500px; border-radius: 6px; }
.task svg { width: 36px; height: 36px; }
.task.active { background: #ebf0fa; box-shadow: 0 0 0 1px #d4dbeb; }
.task.alert { width: 60px; margin: 0 0 0 2px; background: radial-gradient(circle at 40px 50%, transparent 0, transparent 0), linear-gradient(90deg, #fde6e7 0 51px, #d6dcee 51px 54px, #fde6e7 54px); border-radius: 7px; }
.task.alert + .task { margin-left: 8.500px; }
.pill { position: absolute; bottom: 0; left: 24px; width: 9px; height: 5px; border-radius: 3px; background: #777b84; }
.pill.wide { left: 16.500px; width: 24px; background: #0078d4; }
.pill.red { background: #c42b1c; left: 26px; }
.badge.small { left: 36px; top: 8px; width: 20px; height: 20px; background: #d93616; font-size: 14px; line-height: 20px; }
.tray { display: flex; align-items: center; flex: 1; color: #1b1b1b; font-size: 17px; line-height: 24px; letter-spacing: -.3px; }
.chev { margin-left: 103px; }
.mic { display: flex; align-items: center; justify-content: center; width: 44px; height: 56px; margin-left: 18px; border-radius: 6px; background: #edf2f7; box-shadow: 0 0 0 1px #d6e0e8; }
.lang { width: 50px; margin-left: 10px; text-align: center; font-size: 17.500px; }
.wifi { margin-left: 20px; }
.vol { margin-left: 11px; }
.bat { margin-left: 11px; }
.clock { width: 96px; margin-left: 11px; text-align: right; font-size: 17.500px; letter-spacing: -.1px; }
.bell { margin-left: 13px; }
```
